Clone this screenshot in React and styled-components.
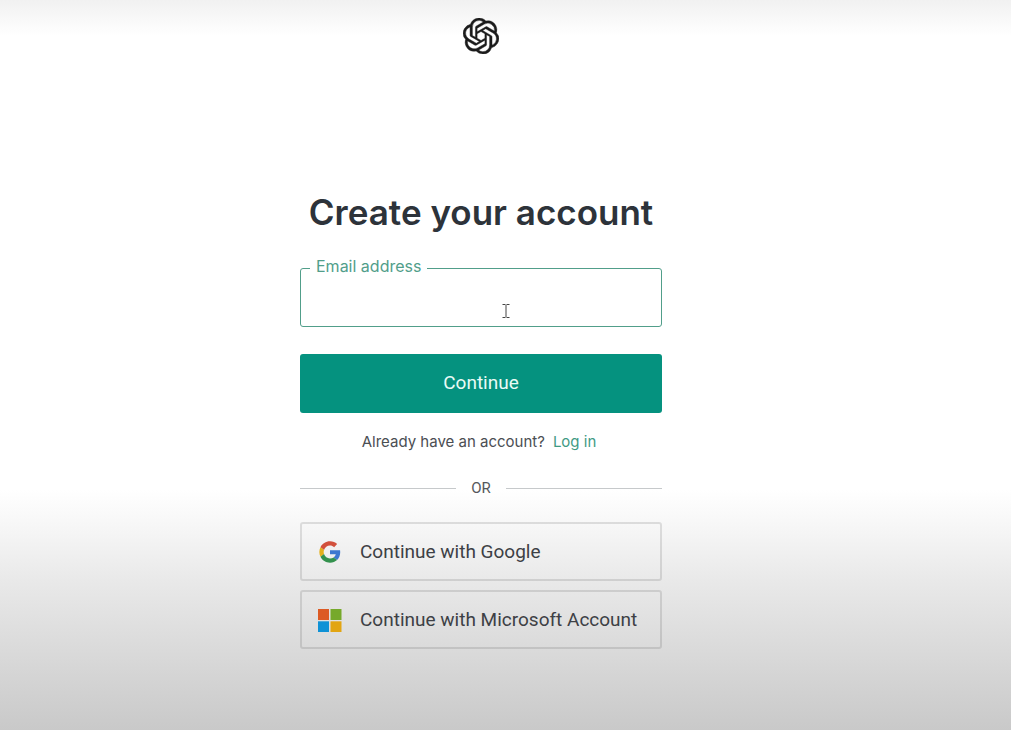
import React from 'react'
import styled, { createGlobalStyle } from 'styled-components'
import { SiOpenai } from 'react-icons/si'

const App = () => {
    return (
        <Page>
            <GlobalStyle />
            <Logo aria-label="OpenAI" />
            <Form onSubmit={e => e.preventDefault()}>
                <Title>Create your account</Title>
                <Field>
                    <Label htmlFor="email">Email address</Label>
                    <Input id="email" type="email" autoComplete="off" />
                    <TextCursor viewBox="0 0 8 16" aria-hidden="true">
                        <path d="M0.5 1.5h3M4.5 1.5h3M4 2v12M0.5 14.5h3M4.5 14.5h3" />
                    </TextCursor>
                </Field>
                <SubmitButton type="submit">Continue</SubmitButton>
                <LoginText>
                    Already have an account?
                    <LoginLink href="#login">Log in</LoginLink>
                </LoginText>
                <Divider>OR</Divider>
                <Providers>
                    <ProviderButton type="button">
                        <GoogleIcon />
                        Continue with Google
                    </ProviderButton>
                    <ProviderButton type="button">
                        <MicrosoftIcon />
                        Continue with Microsoft Account
                    </ProviderButton>
                </Providers>
            </Form>
        </Page>
    )
}

export default App

const GoogleIcon = () => (
    <svg width="24" height="24" viewBox="-3 -3 54 54" aria-hidden="true">
        <path fill="#d2503c" d="M24 9.5c3.54 0 6.71 1.22 9.21 3.6l6.85-6.85C35.9 2.38 30.47 0 24 0 14.62 0 6.51 5.38 2.56 13.22l7.98 6.19C12.43 13.72 17.74 9.5 24 9.5z" />
        <path fill="#3d78d0" d="M46.98 24.55c0-1.57-.15-3.09-.38-4.55H24v9.02h12.94c-.58 2.96-2.26 5.48-4.78 7.18l7.73 6c4.51-4.18 7.09-10.36 7.09-17.65z" />
        <path fill="#e3b01c" d="M10.53 28.59c-.48-1.45-.76-2.99-.76-4.59s.27-3.14.76-4.59l-7.98-6.19C.92 16.46 0 20.12 0 24c0 3.88.92 7.54 2.56 10.78l7.97-6.19z" />
        <path fill="#33914d" d="M24 48c6.48 0 11.93-2.13 15.89-5.81l-7.73-6c-2.15 1.45-4.92 2.3-8.16 2.3-6.26 0-11.57-4.22-13.47-9.91l-7.98 6.19C6.51 42.62 14.62 48 24 48z" />
    </svg>
)

const MicrosoftIcon = () => (
    <svg width="24" height="24" viewBox="0 0 24 24" aria-hidden="true">
        <path fill="#dc5a24" d="M0 1h11v11H0z" />
        <path fill="#76a92b" d="M12.5 1h11v11h-11z" />
        <path fill="#0f92d6" d="M0 13.3h11v10.7H0z" />
        <path fill="#e2a512" d="M12.5 13.3h11v10.7h-11z" />
    </svg>
)

const GlobalStyle = createGlobalStyle`
* {
    box-sizing:border-box;
}
body {
    margin:0;
    color:#2d333a;
    font-family:Roboto, "Liberation Sans", sans-serif;
}
button, input {
    font-family:inherit;
}
`

const Page = styled.main`
display:flex;
flex-direction:column;
align-items:center;
min-height:100vh;
padding:18px 49px 48px 0;
background:
    linear-gradient(to bottom, #f1f1f1, rgba(255,255,255,0) 36px),
    linear-gradient(to top, #c9c9c9, #dadada 80px, #e9e9e9 150px, #f7f7f7 205px, #fff 240px);
`

const Logo = styled(SiOpenai)`
width:36px;
height:36px;
color:#1b1b1b;
stroke:#1b1b1b;
stroke-width:0.3;
`

const Form = styled.form`
display:flex;
flex-direction:column;
width:100%;
max-width:362px;
margin-top:134px;
`

const Title = styled.h1`
margin:0 0 32px;
font-family:Inter, sans-serif;
font-size:35px;
font-weight:600;
line-height:48px;
text-align:center;
white-space:nowrap;
`

const Field = styled.div`
position:relative;
display:flex;
margin-bottom:27px;
`

const Label = styled.label`
position:absolute;
top:-12px;
left:10px;
padding:0 6px;
background:#fff;
color:#519e8a;
font-family:Inter, sans-serif;
font-size:16px;
line-height:20px;
`

const Input = styled.input`
width:100%;
height:59px;
padding:0 16px;
border:1px solid #519e8a;
border-radius:3px;
outline:none;
background:transparent;
font-size:19px;
`

const TextCursor = styled.svg`
position:absolute;
top:35px;
left:202px;
width:8px;
height:16px;
fill:none;
stroke:#444;
`

const SubmitButton = styled.button`
height:59px;
padding:0 16px 3px;
border:0;
border-radius:3px;
background:#05927f;
color:#e9fbf6;
font-size:19px;
cursor:pointer;
`

const LoginText = styled.p`
margin:19px 0 0;
padding-right:4px;
color:#4b4e53;
font-family:Inter, sans-serif;
font-size:15px;
line-height:20px;
text-align:center;
`

const LoginLink = styled.a`
margin-left:8px;
color:#3f9a84;
text-decoration:none;
`

const Divider = styled.div`
display:flex;
align-items:center;
gap:15px;
margin:26px 0 24px;
color:#55585c;
font-size:15px;
line-height:20px;

&::before, &::after {
    content:"";
    flex:1;
    height:1px;
    background:#c6c9cb;
}
`

const Providers = styled.div`
display:flex;
flex-direction:column;
gap:9px;
`

const ProviderButton = styled.button`
display:flex;
align-items:center;
gap:18px;
height:59px;
padding:0 16px;
border:2px solid rgba(0,0,0,0.11);
border-radius:3px;
background:transparent;
color:#3d4045;
font-size:19px;
cursor:pointer;
`
